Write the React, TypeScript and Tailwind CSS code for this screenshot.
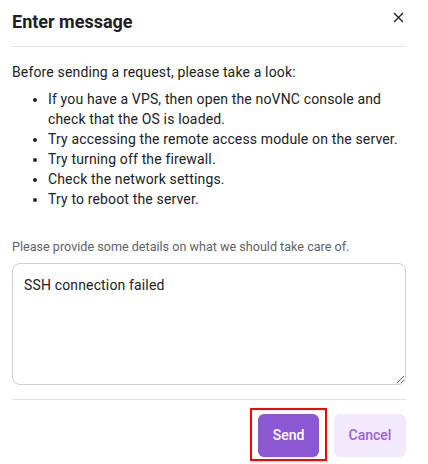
import { useState } from "react";

const tips = [
  "If you have a VPS, then open the noVNC console and check that the OS is loaded.",
  "Try accessing the remote access module on the server.",
  "Try turning off the firewall.",
  "Check the network settings.",
  "Try to reboot the server.",
];

export default function App() {
  const [message, setMessage] = useState("SSH connection failed");

  return (
    <div className="h-[464px] w-[428px] overflow-hidden bg-white font-['Roboto',sans-serif] text-[#202124]">
      <div className="ml-3 w-[394px]">
        <div className="flex h-[47px] items-start justify-between border-b border-[#e3e3e3]">
          <h1 className="pt-[10px] text-[18px] leading-[24px] font-bold">Enter message</h1>
          <button className="mt-[12px] mr-[2px] text-[#202124]" aria-label="Close">
            <svg width="11" height="11" viewBox="0 0 11 11" fill="none" stroke="currentColor" strokeWidth="1.4">
              <path d="M1 1L10 10M10 1L1 10" />
            </svg>
          </button>
        </div>

        <p className="pt-[15px] text-[14px] leading-[20px] tracking-[0.15px]">
          Before sending a request, please take a look:
        </p>
        <ul className="mt-[7px] list-disc pl-[36px] text-[14px] leading-[20px] tracking-[0.15px]">
          {tips.map((t) => (
            <li key={t}>{t}</li>
          ))}
        </ul>

        <label className="mt-[29px] block text-[12.6px] leading-[18px] text-[#5f6368]">
          Please provide some details on what we should take care of.
        </label>
        <textarea
          value={message}
          onChange={(e) => setMessage(e.target.value)}
          className="mt-[7px] block h-[122px] w-[394px] rounded-[8px] border border-[#cfcfd4] px-[11px] py-[11px] text-[14px] leading-[20px] tracking-[0.15px] text-[#202124] outline-none"
        />

        <div className="mt-[14px] flex justify-end border-t border-[#e3e3e3] pt-[8px]">
          <div className="border-2 border-[#ff0000] px-[6px] pt-[4px] pb-[2px]">
            <button className="h-[43px] w-[61px] rounded-[6px] bg-[#8b57d3] text-[14px] font-medium text-white">
              Send
            </button>
          </div>
          <button className="mt-[6px] ml-[7px] h-[43px] w-[72px] rounded-[6px] bg-[#f2e9fc] text-[14px] font-medium text-[#9b5fd8]">
            Cancel
          </button>
        </div>
      </div>
    </div>
  );
}
